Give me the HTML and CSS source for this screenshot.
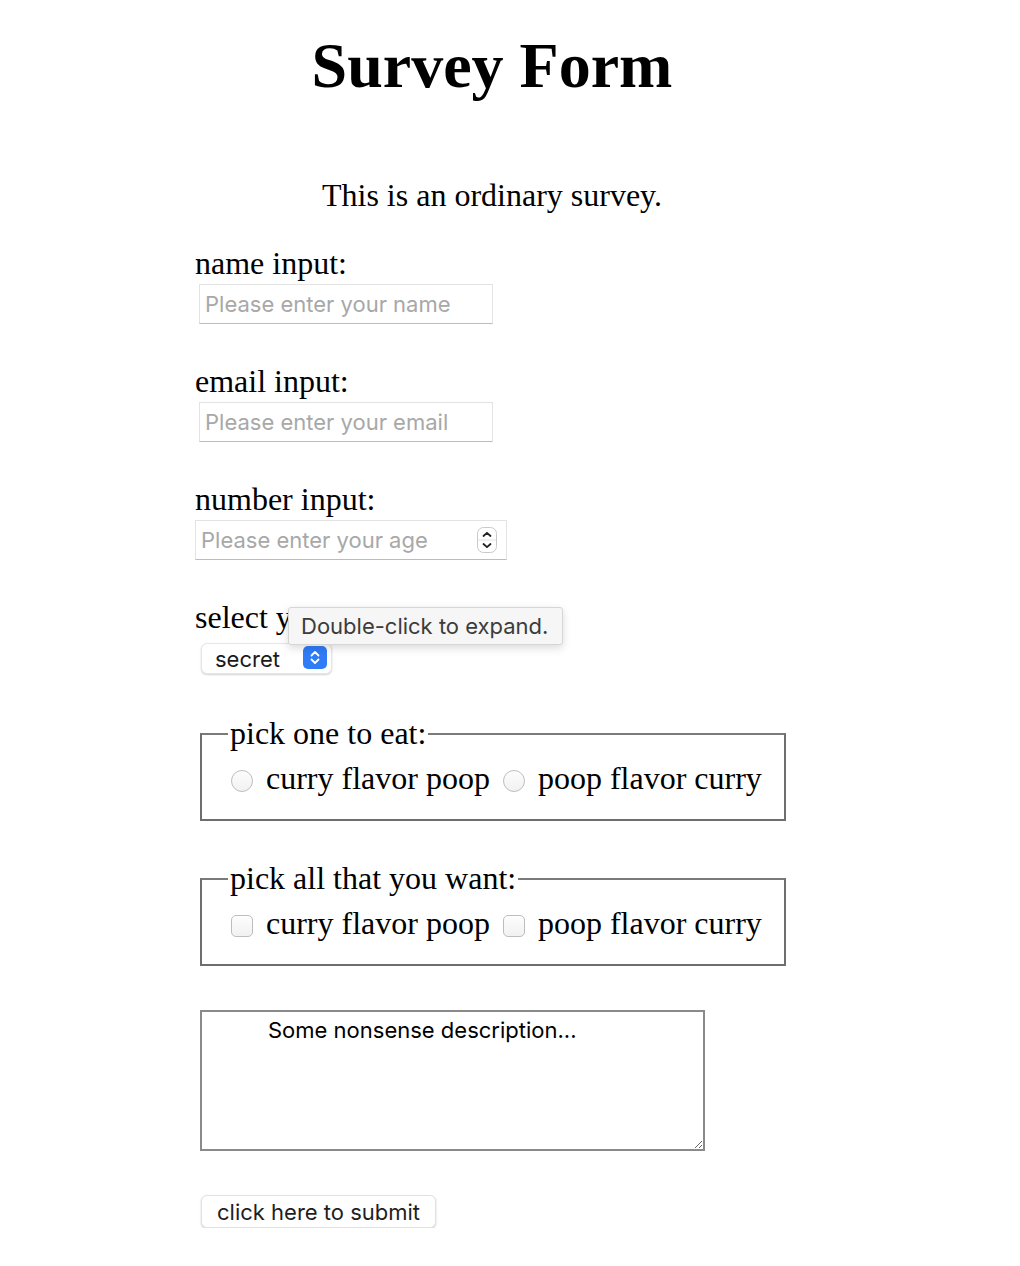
FILE: index.html
```html
<!DOCTYPE html>
<html lang="en">
	<head>
		<meta charset="UTF-8" />
		<meta name="viewport" content="width=device-width, initial-scale=1.0" />
		<title>Survey Form</title>
		<link rel="stylesheet" href="styles.css">
	</head>
	<body>
		<div class="page">
			<h1 id="title">Survey Form</h1>
			<p id="description">This is an ordinary survey.</p>

			<form id="survey-form">
				<div class="field">
					<label for="name">name input:</label>
					<input id="name" class="text-input inset" type="text" placeholder="Please enter your name">
				</div>

				<div class="field">
					<label for="email">email input:</label>
					<input id="email" class="text-input inset" type="email" placeholder="Please enter your email">
				</div>

				<div class="field">
					<label for="number">number input:</label>
					<div class="number-wrap">
						<input id="number" class="text-input number-input" type="number" placeholder="Please enter your age">
						<svg class="spinner" width="20" height="26" viewBox="0 0 20 26">
							<rect x="0.5" y="0.5" width="19" height="25" rx="6" fill="#fff" stroke="#c9c9c9" />
							<line x1="1" y1="13" x2="19" y2="13" stroke="#e2e2e2" />
							<path d="M6.5 9 L10 5.8 L13.5 9" fill="none" stroke="#222" stroke-width="1.8" stroke-linecap="round" stroke-linejoin="round" />
							<path d="M6.5 17 L10 20.2 L13.5 17" fill="none" stroke="#222" stroke-width="1.8" stroke-linecap="round" stroke-linejoin="round" />
						</svg>
					</div>
				</div>

				<div class="field">
					<label for="dropdown">select your sex:</label>
					<div class="select-wrap">
						<select id="dropdown">
							<option>secret</option>
							<option>male</option>
							<option>female</option>
						</select>
						<svg class="stepper" width="24" height="23" viewBox="0 0 24 23">
							<rect width="24" height="23" rx="5" fill="#2f7cf6" />
							<path d="M8.5 9.5 L12 6 L15.5 9.5" fill="none" stroke="#fff" stroke-width="1.8" stroke-linecap="round" stroke-linejoin="round" />
							<path d="M8.5 13.5 L12 17 L15.5 13.5" fill="none" stroke="#fff" stroke-width="1.8" stroke-linecap="round" stroke-linejoin="round" />
						</svg>
					</div>
				</div>

				<fieldset class="group first">
					<legend>pick one to eat:</legend>
					<label><input type="radio" name="food" value="poop"> curry flavor poop</label>
					<label><input type="radio" name="food" value="curry"> poop flavor curry</label>
				</fieldset>

				<fieldset class="group">
					<legend>pick all that you want:</legend>
					<label><input type="checkbox" value="poop"> curry flavor poop</label>
					<label><input type="checkbox" value="curry"> poop flavor curry</label>
				</fieldset>

				<textarea class="comments">Some nonsense description...</textarea>

				<button id="submit" type="submit">click here to submit</button>
			</form>

			<div class="tooltip">Double-click to expand.</div>
		</div>
	</body>
</html>
```

FILE: styles.css
```css
body {
	margin: 0;
	font-family: "Liberation Serif", "Times New Roman", serif;
	font-size: 32px;
	color: #000;
	background: #fff;
}

.page {
	position: relative;
	width: 984px;
	padding-top: 30px;
}

h1 {
	text-align: center;
	font-size: 64px;
	line-height: 72px;
	margin: 0;
}

#description {
	text-align: center;
	line-height: 37px;
	margin: 75px 0 0;
}

form {
	padding-left: 195px;
	margin-top: 31px;
}

.field {
	margin-bottom: 39px;
}

.field label {
	display: block;
	line-height: 37px;
}

.text-input {
	box-sizing: border-box;
	display: block;
	height: 40px;
	margin-top: 2px;
	padding: 0 5px;
	font-family: Inter, "Liberation Sans", sans-serif;
	font-size: 22px;
	color: #000;
	background: #fff;
	border: 1px solid #e3e3e3;
	border-bottom-color: #bcbcbc;
	border-radius: 0;
	outline: none;
}

.text-input::placeholder {
	color: #a8a8a8;
}

.inset {
	width: 294px;
	margin-left: 4px;
}

/* number input with mac style spinner */
.number-wrap {
	position: relative;
	width: 312px;
}

.number-input {
	width: 312px;
	-moz-appearance: textfield;
}

.number-input::-webkit-inner-spin-button,
.number-input::-webkit-outer-spin-button {
	-webkit-appearance: none;
	margin: 0;
}

.spinner {
	position: absolute;
	left: 282px;
	top: 7px;
	pointer-events: none;
}

.select-wrap {
	position: relative;
	width: 131px;
	margin: 7px 0 0 6px;
}

select {
	-webkit-appearance: none;
	appearance: none;
	box-sizing: border-box;
	display: block;
	width: 131px;
	height: 31px;
	padding: 0 0 0 13px;
	font-family: Inter, "Liberation Sans", sans-serif;
	font-size: 22px;
	color: #1a1a1a;
	background: #fff;
	border: 1px solid #e6e6e6;
	border-radius: 6px;
	box-shadow: 0 1px 2px rgba(0, 0, 0, 0.18);
	outline: none;
}

.stepper {
	position: absolute;
	left: 102px;
	top: 3px;
	pointer-events: none;
}

.group {
	width: fit-content;
	margin: 41px 0 0 5px;
	padding: 8px 22px 22px 24px;
	border: 2px solid #6e6e6e;
	border-top-color: #7a7a7a;
}

.group + .group {
	margin-top: 39px;
}

.group legend {
	line-height: 37px;
	margin-left: 2px;
	padding: 0 2px;
}

.group label {
	line-height: 37px;
	white-space: nowrap;
}

.group input {
	-webkit-appearance: none;
	appearance: none;
	box-sizing: border-box;
	width: 22px;
	height: 22px;
	margin: 0 5px 0 5px;
	vertical-align: -3px;
	background: linear-gradient(#fdfdfd, #f1f1f1);
	border: 1px solid #bdbdbd;
	box-shadow: inset 0 1px 1px rgba(255, 255, 255, 0.9);
}

.group input[type="radio"] {
	border-radius: 50%;
}

.group input[type="checkbox"] {
	border-radius: 5px;
}

.comments {
	box-sizing: border-box;
	display: block;
	width: 505px;
	height: 141px;
	margin: 44px 0 0 5px;
	padding: 5px 8px 0 66px;
	font-family: Inter, "Liberation Sans", sans-serif;
	font-size: 22px;
	color: #000;
	border: 2px solid #8a8a8a;
	resize: both;
}

#submit {
	display: block;
	height: 33px;
	margin: 44px 0 0 6px;
	padding: 0 15px;
	font-family: Inter, "Liberation Sans", sans-serif;
	font-size: 22px;
	color: #1e1e1e;
	background: #fff;
	border: 1px solid #e2e2e2;
	border-radius: 6px;
	box-shadow: 0 1px 2px rgba(0, 0, 0, 0.2);
	cursor: pointer;
}

/* browser hint sitting over the select label */
.tooltip {
	position: absolute;
	left: 288px;
	top: 607px;
	box-sizing: border-box;
	height: 38px;
	padding: 0 14px 0 12px;
	font-family: Inter, "Liberation Sans", sans-serif;
	font-size: 22px;
	line-height: 37px;
	color: #3c3c3c;
	background: #f6f6f6;
	border: 1px solid #d6d6d6;
	border-radius: 3px;
	box-shadow: 0 3px 8px rgba(0, 0, 0, 0.15);
}
```
